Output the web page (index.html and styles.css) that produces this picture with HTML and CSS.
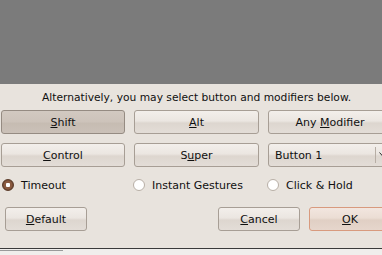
FILE: index.html
```html
<!DOCTYPE html>
<html lang="en">
<head>
  <meta charset="UTF-8" />
  <title>Mouse Button Binding</title>
  <link rel="stylesheet" href="styles.css">
</head>
<body>
  <div class="backdrop"></div>
  <div class="dialog">
    <p class="hint">Alternatively, you may select button and modifiers below.</p>
    <div class="grid">
      <button class="btn pressed"><u>S</u>hift</button>
      <button class="btn"><u>A</u>lt</button>
      <button class="btn">Any <u>M</u>odifier</button>
      <button class="btn"><u>C</u>ontrol</button>
      <button class="btn">S<u>u</u>per</button>
      <div class="combo">
        <span class="value">Button 1</span>
        <span class="arrow"><svg width="9" height="6" viewBox="0 0 9 6"><path d="M0.5 0.5 L4.5 5 L8.5 0.5" fill="none" stroke="#2a2a2a" stroke-width="1"/></svg></span>
      </div>
    </div>
    <div class="grid radios">
      <label class="radio"><span class="dot checked"></span>Timeout</label>
      <label class="radio"><span class="dot"></span>Instant Gestures</label>
      <label class="radio"><span class="dot"></span>Click &amp; Hold</label>
    </div>
    <div class="actions">
      <button class="btn small"><u>D</u>efault</button>
      <div class="spacer"></div>
      <button class="btn small"><u>C</u>ancel</button>
      <button class="btn small default"><u>O</u>K</button>
    </div>
  </div>
  <div class="bottom"><div class="tab"></div></div>
</body>
</html>
```

FILE: styles.css
```css
* { box-sizing: border-box; }
body {
  margin: 0;
  width: 382px;
  height: 255px;
  overflow: hidden;
  background: #e8e3dd;
  font-family: 'DejaVu Sans', sans-serif;
  font-size: 11px;
  color: #101010;
}
.backdrop { height: 84px; background: #7b7b7b; }
.dialog {
  width: 400px;
  height: 164px;
  background: #e8e3dd;
}
.hint {
  margin: 0;
  padding-top: 7px;
  height: 26px;
  width: 393px;
  text-align: center;
  font-size: 10.7px;
}
.grid {
  display: grid;
  grid-template-columns: 124px 125px 124px;
  column-gap: 9px;
  row-gap: 9px;
  padding-left: 1px;
}
.btn {
  height: 24px;
  border: 1px solid #a79e95;
  border-radius: 3px;
  background: linear-gradient(#f3efeb 0%, #ebe6e1 45%, #ddd6cf 55%, #e3ddd7 100%);
  font-family: inherit;
  font-size: 11px;
  color: #101010;
  padding: 0;
}
.btn.pressed {
  background: linear-gradient(#d2c9c1 0%, #cdc3ba 50%, #c6bcb2 55%, #cbc1b8 100%);
  border-color: #958b82;
}
.combo {
  height: 24px;
  border: 1px solid #a79e95;
  border-radius: 3px;
  background: linear-gradient(#f3efeb 0%, #ebe6e1 45%, #ddd6cf 55%, #e3ddd7 100%);
  display: flex;
  align-items: center;
  padding-left: 6px;
}
.value { width: 100px; }
.arrow {
  height: 16px;
  border-left: 1px solid #b7aea5;
  padding-left: 3px;
  display: flex;
  align-items: center;
}
.radios { margin-top: 10px; height: 16px; }
.radio {
  display: flex;
  align-items: center;
  gap: 7px;
}
.dot {
  width: 12px;
  height: 12px;
  border-radius: 50%;
  background: #fff;
  border: 1px solid #b8afa6;
  margin-left: 1px;
}
.radios .radio:nth-child(n+2) .dot { margin-left: -1px; }
.dot.checked {
  border-color: #5a3a28;
  background: radial-gradient(circle, #ffffff 0 2px, #8a5a40 2.5px 4px, #6b4530 5px);
}
.actions {
  display: flex;
  gap: 9px;
  margin-top: 14px;
  padding-left: 5px;
}
.btn.small { width: 82px; }
.spacer { width: 113px; }
.btn.default {
  border-color: #d89a7e;
  background: linear-gradient(#f2e6df 0%, #ebddd4 45%, #e0cfc4 55%, #e6d6cc 100%);
}
.bottom {
  height: 7px;
  border-top: 1px solid #3a3a3a;
  background: #f0eeec;
}
.tab {
  width: 63px;
  height: 1px;
  margin-top: 1px;
  background: #9a9a9a;
}
```
